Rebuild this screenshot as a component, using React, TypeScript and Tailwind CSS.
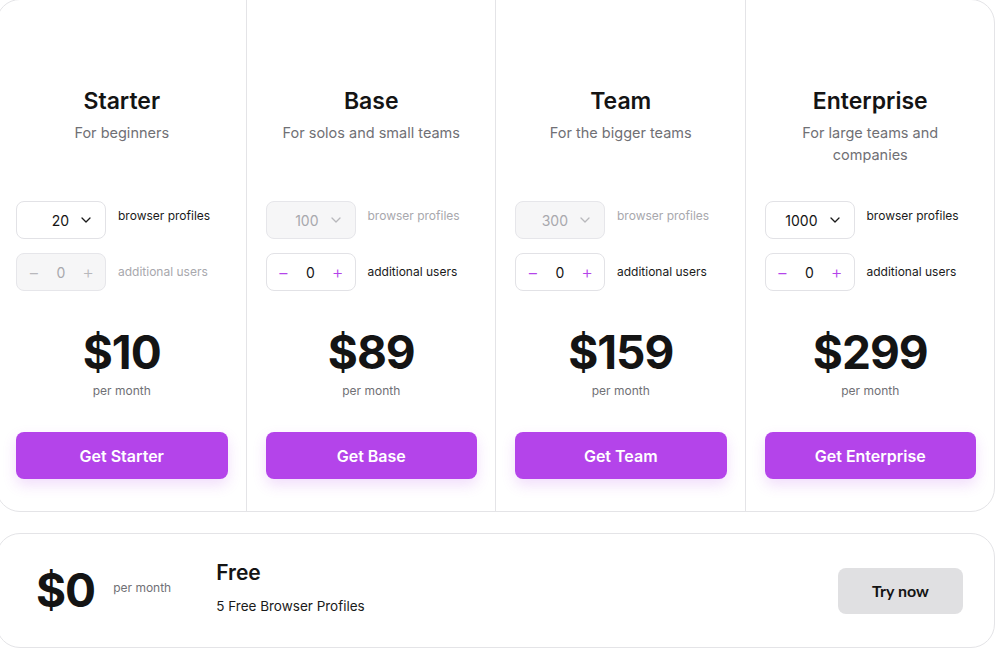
import React from "react";

type Plan = {
  name: string;
  desc: string;
  profiles: string;
  price: string;
  profilesEnabled: boolean;
  usersEnabled: boolean;
};

const plans: Plan[] = [
  { name: "Starter", desc: "For beginners", profiles: "20", price: "$10", profilesEnabled: true, usersEnabled: false },
  { name: "Base", desc: "For solos and small teams", profiles: "100", price: "$89", profilesEnabled: false, usersEnabled: true },
  { name: "Team", desc: "For the bigger teams", profiles: "300", price: "$159", profilesEnabled: false, usersEnabled: true },
  { name: "Enterprise", desc: "For large teams and companies", profiles: "1000", price: "$299", profilesEnabled: true, usersEnabled: true },
];

const Chevron = ({ muted }: { muted: boolean }) => (
  <svg width="10" height="6" viewBox="0 0 10 6" fill="none" className={muted ? "text-[#b8b8bc]" : "text-[#1a1a1a]"}>
    <path d="M1 1l4 4 4-4" stroke="currentColor" strokeWidth="1.3" strokeLinecap="round" strokeLinejoin="round" />
  </svg>
);

const PlanColumn = ({ plan, last }: { plan: Plan; last: boolean }) => {
  return (
    <div className={`flex-1 flex flex-col items-stretch pl-[19px] pr-[18px] pt-[85px] pb-[32px] ${last ? "" : "border-r border-[#e4e4e7]"}`}>
      {/* Heading */}
      <h2 className="text-center text-[23px] leading-[32px] font-semibold text-[#141414]">{plan.name}</h2>
      <p className="mt-[5px] h-[44px] px-[12px] text-center text-[14.5px] leading-[22px] text-[#707075]">{plan.desc}</p>

      {/* Controls */}
      <div className="mt-[35px] flex flex-col gap-[14px]">
        <div className="flex items-start gap-[12px]">
          <div
            className={`w-[90px] h-[38px] rounded-[8px] border flex items-center justify-end pr-[14px] gap-[12px] ${
              plan.profilesEnabled ? "border-[#e2e2e6] bg-white text-[#141414]" : "border-[#e6e6ea] bg-[#f6f6f7] text-[#a8a8ad]"
            }`}
          >
            <span className="text-[14px]">{plan.profiles}</span>
            <Chevron muted={!plan.profilesEnabled} />
          </div>
          <span className={`pt-[7px] text-[12px] leading-[16px] ${plan.profilesEnabled ? "text-[#1a1a1a]" : "text-[#a8a8ad]"}`}>
            browser profiles
          </span>
        </div>
        <div className="flex items-center gap-[12px]">
          <div
            className={`w-[90px] h-[38px] rounded-[8px] border flex items-center justify-between px-[11px] text-[14px] ${
              plan.usersEnabled ? "border-[#e2e2e6] bg-white" : "border-[#e6e6ea] bg-[#f6f6f7]"
            }`}
          >
            <span className={`text-[18px] font-light ${plan.usersEnabled ? "text-[#b444ea]" : "text-[#b8b8bc]"}`}>−</span>
            <span className={plan.usersEnabled ? "text-[#141414]" : "text-[#a8a8ad]"}>0</span>
            <span className={`text-[18px] font-light ${plan.usersEnabled ? "text-[#b444ea]" : "text-[#b8b8bc]"}`}>+</span>
          </div>
          <span className={`text-[12px] leading-[16px] ${plan.usersEnabled ? "text-[#1a1a1a]" : "text-[#a8a8ad]"}`}>
            additional users
          </span>
        </div>
      </div>

      {/* Price */}
      <div className="mt-[33px] text-center text-[46px] leading-[56px] font-bold tracking-[-1px] text-[#141414]">{plan.price}</div>
      <div className="mt-[3px] text-center text-[12px] leading-[16px] text-[#707075]">per month</div>

      <button className="mt-[33px] h-[47px] rounded-[8px] bg-[#b444ea] text-white text-[16px] font-semibold shadow-[0_6px_14px_rgba(180,68,234,0.18)]">
        Get {plan.name}
      </button>
    </div>
  );
};

export default function App() {
  return (
    <div className="bg-white min-h-screen" style={{ fontFamily: "Inter, 'Noto Sans', sans-serif" }}>
      <div className="w-[999px] -ml-[4px] -mt-[1px] flex flex-col gap-[21px]">
        {/* Paid plans */}
        <div className="flex rounded-[24px] border border-[#e4e4e7] bg-white">
          {plans.map((p, i) => (
            <PlanColumn key={p.name} plan={p} last={i === plans.length - 1} />
          ))}
        </div>

        {/* Free plan */}
        <div className="h-[115px] flex items-center rounded-[24px] border border-[#e4e4e7] bg-white pl-[39px] pr-[31px]">
          <div className="mt-[-2px] text-[46px] leading-[56px] font-bold tracking-[-1px] text-[#141414]">$0</div>
          <div className="ml-[18px] mb-[6px] text-[12px] text-[#707075]">per month</div>
          <div className="ml-[45px] mb-[8px] flex flex-col">
            <div className="text-[21px] leading-[28px] font-semibold text-[#141414]">Free</div>
            <div className="mt-[10px] text-[13.5px] leading-[18px] text-[#1a1a1a]">5 Free Browser Profiles</div>
          </div>
          <button
            className="ml-auto w-[125px] h-[46px] rounded-[8px] bg-[#e0e0e2] text-[16px] font-bold text-[#141414]"
            style={{ fontFamily: "Lato, sans-serif" }}
          >
            Try now
          </button>
        </div>
      </div>
    </div>
  );
}
